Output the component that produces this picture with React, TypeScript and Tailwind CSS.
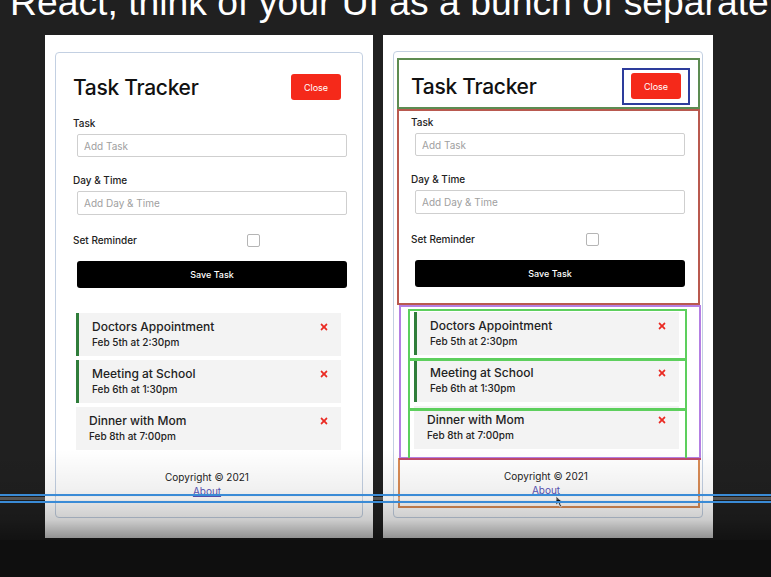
import React from "react";
import { FaTimes } from "react-icons/fa";

type Task = { text: string; day: string; reminder: boolean };

const tasks: Task[] = [
  { text: "Doctors Appointment", day: "Feb 5th at 2:30pm", reminder: true },
  { text: "Meeting at School", day: "Feb 6th at 1:30pm", reminder: true },
  { text: "Dinner with Mom", day: "Feb 8th at 7:00pm", reminder: false },
];

function TaskTracker({ debug }: { debug?: boolean }) {
  return (
    <div className="relative h-full rounded-[4px] border border-[#c3d0e2] pl-[17px] pr-[21px] pt-[21px]">
      <header className="flex h-[26px] items-center justify-between">
        <h1 className="text-[21px] font-medium leading-none tracking-[-0.3px] text-[#111]">Task Tracker</h1>
        <button className="h-[26px] w-[50px] rounded-[3px] bg-[#f5291a] text-[9px] text-white">Close</button>
      </header>
      <form className="mt-[16px]">
        <div>
          <label className="block text-[10px] font-medium leading-[14px] text-[#222]">Task</label>
          <input
            className="ml-[4px] mt-[4px] block h-[23px] w-[270px] rounded-[2px] border border-[#cfcfcf] px-[6px] text-[10px] outline-none placeholder:text-[#a0a0a0]"
            placeholder="Add Task"
          />
        </div>
        <div className="mt-[16px]">
          <label className="block text-[10px] font-medium leading-[14px] text-[#222]">Day &amp; Time</label>
          <input
            className="ml-[4px] mt-[4px] block h-[24px] w-[270px] rounded-[2px] border border-[#cfcfcf] px-[6px] text-[10px] outline-none placeholder:text-[#a0a0a0]"
            placeholder="Add Day & Time"
          />
        </div>
        <div className="mt-[18px] flex h-[14px] items-center">
          <label className="w-[89px] text-[10px] font-medium leading-[14px] text-[#222]">Set Reminder</label>
          <div className="flex flex-1 justify-center">
            <div className="ml-[4px] h-[13px] w-[13px] rounded-[2px] border border-[#b5b5b5] bg-white" />
          </div>
        </div>
        <button
          type="button"
          className="ml-[4px] mt-[14px] block h-[27px] w-[270px] rounded-[3px] bg-black text-[9px] font-medium text-white"
        >
          Save Task
        </button>
      </form>
      <div className="mt-[25px] flex flex-col gap-[4px]">
        {tasks.map((t) => (
          <div
            key={t.text}
            className={
              "ml-[3px] h-[43px] w-[265px] bg-[#f3f3f3] py-[6px] pl-[13px] pr-[12px] " +
              (t.reminder ? "border-l-[3px] border-[#2f7d3a]" : "")
            }
          >
            <div className="flex h-[16px] items-center justify-between">
              <span className="text-[12px] font-medium leading-[16px] text-[#222]">{t.text}</span>
              <FaTimes className="text-[#ea2a22]" size={10} />
            </div>
            <div className="text-[10px] font-medium leading-[14px] text-[#222]">{t.day}</div>
          </div>
        ))}
      </div>
      <footer className="mt-[20px] text-center text-[10px] leading-[14px] text-[#222]">
        <p>Copyright &copy; 2021</p>
        <a className="text-[#5b54b8] underline">About</a>
      </footer>

      {debug && (
        <>
          <div className="pointer-events-none absolute left-[3px] top-[6px] h-[51px] w-[303px] border-2 border-[#5d8c52]" />
          <div className="pointer-events-none absolute left-[228px] top-[16px] h-[37px] w-[68px] border-2 border-[#2d3c9c]" />
          <div className="pointer-events-none absolute left-[3px] top-[57px] h-[196px] w-[303px] border-2 border-[#b9594f]" />
          <div className="pointer-events-none absolute left-[5px] top-[253px] h-[154px] w-[302px] border-2 border-[#b47fe3]" />
          <div className="pointer-events-none absolute left-[14px] top-[257px] h-[51px] w-[279px] border-2 border-[#5dcf5d]" />
          <div className="pointer-events-none absolute left-[14px] top-[307px] h-[51px] w-[279px] border-2 border-[#5dcf5d]" />
          <div className="pointer-events-none absolute left-[14px] top-[357px] h-[51px] w-[279px] border-2 border-[#5dcf5d]" />
          <div className="pointer-events-none absolute left-[4px] top-[406px] h-[50px] w-[302px] border-2 border-[#d98b55]" />
          <div className="pointer-events-none absolute left-[5px] top-[406px] h-[2px] w-[302px] bg-[#c04a6a]" />
          <svg className="pointer-events-none absolute left-[161px] top-[443px]" width="9" height="13" viewBox="0 0 9 13">
            <path d="M1 1 L1 10 L3.3 8 L5 12 L6.5 11.3 L4.9 7.6 L8 7.6 Z" fill="#111" stroke="#fff" strokeWidth="0.8" />
          </svg>
        </>
      )}
    </div>
  );
}

export default function App() {
  return (
    <div className="relative h-[577px] w-[771px] overflow-hidden bg-[#0f0f0f] font-['Inter',sans-serif]">
      <div className="flex h-[540px] flex-col bg-[#202020]">
        <div className="-mt-[16px] ml-[10px] whitespace-nowrap font-['Liberation_Sans',Arial,sans-serif] text-[37.3px] leading-none text-white">
          React, think of your UI as a bunch of separate
        </div>
        <div className="mt-[14px] flex gap-[10px] pl-[45px]">
          <div className="h-[503px] w-[328px] bg-white px-[10px] pb-[20px] pt-[17px]">
            <TaskTracker />
          </div>
          <div className="h-[503px] w-[330px] bg-white px-[10px] pb-[20px] pt-[16px]">
            <TaskTracker debug />
          </div>
        </div>
      </div>

      <div className="pointer-events-none absolute inset-x-0 top-[450px] h-[90px] bg-[linear-gradient(to_bottom,rgba(0,0,0,0)_0px,rgba(0,0,0,0.06)_40px,rgba(0,0,0,0.2)_70px,rgba(0,0,0,0.45)_90px)]" />
      <div className="pointer-events-none absolute inset-x-0 top-[497px] h-[3px] bg-white/25" />
      <div className="pointer-events-none absolute inset-x-0 top-[494px] h-[2px] bg-[#3a8bd6]" />
      <div className="pointer-events-none absolute inset-x-0 top-[501px] h-[2px] bg-[#3a8bd6]" />
    </div>
  );
}
